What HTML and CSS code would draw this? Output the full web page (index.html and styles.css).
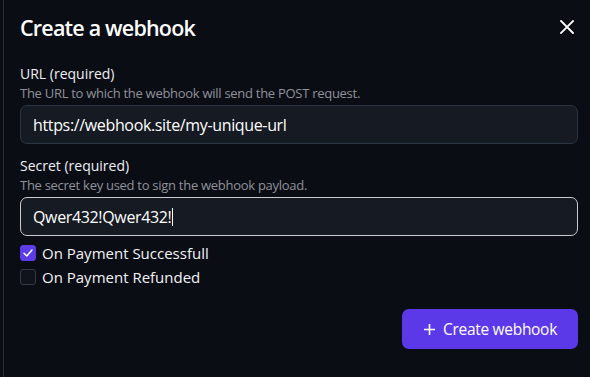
FILE: index.html
```html
<!DOCTYPE html>
<html>
<head>
<meta charset="utf-8">
<link rel="stylesheet" href="styles.css">
</head>
<body>
<div class="edge"></div>
<div class="dialog">
  <div class="header">
    <h1 class="title">Create a webhook</h1>
    <button class="close" aria-label="Close">
      <svg width="14" height="14" viewBox="0 0 14 14"><path d="M1 1L13 13M13 1L1 13" stroke="#fff" stroke-width="1.8" stroke-linecap="square"/></svg>
    </button>
  </div>
  <div class="field">
    <label class="label">URL (required)</label>
    <div class="hint">The URL to which the webhook will send the POST request.</div>
    <div class="input">https://webhook.site/my-unique-url</div>
  </div>
  <div class="field">
    <label class="label">Secret (required)</label>
    <div class="hint">The secret key used to sign the webhook payload.</div>
    <div class="input focused">Qwer432!Qwer432!<span class="caret"></span></div>
  </div>
  <div class="checks">
    <div class="check">
      <span class="box checked">
        <svg width="12" height="12" viewBox="0 0 12 12"><path d="M2 6.2L4.8 9L10 3" fill="none" stroke="#fff" stroke-width="1.5" stroke-linecap="round" stroke-linejoin="round"/></svg>
      </span>
      <span class="check-label">On Payment Successfull</span>
    </div>
    <div class="check">
      <span class="box"></span>
      <span class="check-label">On Payment Refunded</span>
    </div>
  </div>
  <div class="footer">
    <button class="primary">
      <svg width="13" height="13" viewBox="0 0 13 13"><path d="M6.5 1V12M1 6.5H12" stroke="#fff" stroke-width="1.6"/></svg>
      Create webhook
    </button>
  </div>
</div>
</body>
</html>
```
FILE: styles.css
```css
* { box-sizing: border-box; }
html, body { margin: 0; padding: 0; }
body {
  background: #0b0d15;
  width: 590px;
  height: 377px;
  overflow: hidden;
  font-family: "Open Sans", "DejaVu Sans", sans-serif;
  color: #f2f3f5;
  display: flex;
}
.edge {
  width: 4px;
  border-right: 1px solid #2a2f38;
  background: #0a0c12;
  flex: none;
}
.dialog {
  flex: 1;
  padding: 12px 12px 0 16px;
  display: flex;
  flex-direction: column;
}
.header {
  display: flex;
  justify-content: space-between;
  align-items: center;
  height: 30px;
}
.title {
  margin: 0;
  font-size: 21.5px;
  font-weight: 600;
  letter-spacing: -0.8px;
  color: #fff;
}
.close {
  background: none;
  border: 0;
  padding: 0;
  width: 14px;
  height: 14px;
  margin-right: 4px;
  display: flex;
}
.field { display: flex; flex-direction: column; margin-top: 22px; }
.field + .field { margin-top: 12px; }
.label { font-size: 14px; font-weight: 500; color: #eef0f3; line-height: 20px; }
.hint { font-size: 13px; color: #8f929a; line-height: 18px; letter-spacing: -0.28px; }
.input {
  margin-top: 3px;
  height: 39px;
  border: 1px solid #2b3442;
  background: #161a22;
  border-radius: 7px;
  padding: 0 12px;
  display: flex;
  align-items: center;
  font-size: 16px;
  letter-spacing: -0.35px;
  color: #fff;
}
.input.focused { border-color: #c9cacd; }
.caret { display: inline-block; width: 1px; height: 18px; background: #fff; margin-left: 1px; }
.checks { display: flex; flex-direction: column; gap: 8px; margin-top: 9px; }
.check { display: flex; align-items: center; gap: 6px; height: 16px; }
.box {
  width: 16px; height: 16px;
  border: 1px solid #343a46;
  border-radius: 3px;
  background: #10131b;
  display: flex; align-items: center; justify-content: center;
}
.box.checked { background: #5b3ce6; border-color: #5b3ce6; }
.check-label { font-size: 15px; color: #f2f3f5; }
.footer { display: flex; justify-content: flex-end; margin-top: 24px; }
.primary {
  width: 176px;
  height: 40px;
  background: #5c39e8;
  border: 0;
  border-radius: 7px;
  color: #fff;
  font-family: inherit;
  font-size: 15.5px;
  letter-spacing: -0.3px;
  font-weight: 500;
  display: flex; align-items: center; justify-content: center;
  gap: 7px;
}
```
